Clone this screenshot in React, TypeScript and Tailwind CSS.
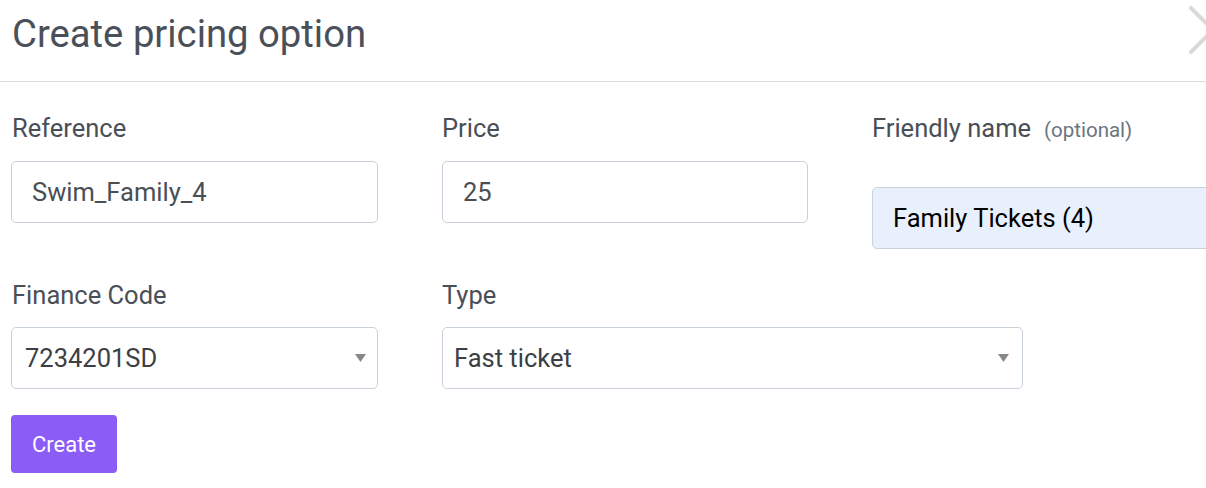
import React from "react";

const font = { fontFamily: "Roboto, 'Noto Sans', Arial, sans-serif" };

function Caret() {
  return (
    <svg width="11" height="8" viewBox="0 0 11 8">
      <path d="M0 0 L11 0 L5.5 8 Z" fill="#888888" />
    </svg>
  );
}

export default function App() {
  return (
    <div
      className="w-[1206px] h-[488px] overflow-hidden bg-white relative"
      style={font}
    >
      <div className="relative border-b border-[#d9dfe5] pt-[12px] pb-[24px] pl-[12px]">
        <h1 className="text-[38.25px] leading-[45px] text-[#4a5059] font-normal">
          Create pricing option
        </h1>
        <svg
          className="absolute left-[1189px] top-[6px]"
          width="48"
          height="48"
          viewBox="0 0 48 48"
        >
          <path
            d="M2 2 L46 46 M46 2 L2 46"
            stroke="#d9d9d9"
            strokeWidth="4"
            strokeLinecap="round"
            fill="none"
          />
        </svg>
      </div>

      <div className="pl-[11px] pt-[31px]">
        <div className="flex items-start gap-[64px] h-[110px]">
          <div className="w-[367px] shrink-0">
            <div className="text-[25.5px] leading-[30px] text-[#4a4f57] pl-[1px]">
              Reference
            </div>
            <div className="mt-[18px] h-[62px] border border-[#c9d1da] rounded-[5px] flex items-center pl-[20px] text-[25.5px] text-[#4a4f55]">
              Swim_Family_4
            </div>
          </div>
          <div className="w-[366px] shrink-0">
            <div className="text-[25.5px] leading-[30px] text-[#4a4f57]">
              Price
            </div>
            <div className="mt-[18px] h-[62px] border border-[#c9d1da] rounded-[5px] flex items-center pl-[20px] text-[25.5px] text-[#4a4f55]">
              25
            </div>
          </div>
          <div className="w-[366px] shrink-0">
            <div className="flex items-baseline leading-[30px]">
              <span className="text-[25.5px] text-[#4a4f57]">Friendly name</span>
              <span className="ml-[13px] text-[20.5px] text-[#6b7580]">
                (optional)
              </span>
            </div>
            <div className="mt-[42px] h-[62px] border border-[#c9d1da] rounded-[5px] bg-[#e8f0fe] flex items-center pl-[20px] text-[25.5px] text-black">
              Family Tickets (4)
            </div>
          </div>
        </div>

        <div className="flex gap-[64px] mt-[57px]">
          <div className="w-[367px] shrink-0">
            <div className="text-[25.5px] leading-[30px] text-[#4a4f57] pl-[1px]">
              Finance Code
            </div>
            <div className="mt-[17px] h-[62px] border border-[#c9d1da] rounded-[5px] flex items-center justify-between pl-[13px] pr-[11px] text-[25.5px] text-[#3c3f44]">
              <span>7234201SD</span>
              <Caret />
            </div>
          </div>
          <div className="w-[581px] shrink-0">
            <div className="text-[25.5px] leading-[30px] text-[#4a4f57]">
              Type
            </div>
            <div className="mt-[17px] h-[62px] border border-[#c9d1da] rounded-[5px] flex items-center justify-between pl-[11px] pr-[13px] text-[25.5px] text-[#3c3f44]">
              <span>Fast ticket</span>
              <Caret />
            </div>
          </div>
        </div>

        <button className="mt-[26px] w-[106px] h-[58px] rounded-[4px] bg-[#8b5cf6] text-white text-[22px] flex items-center justify-center">
          Create
        </button>
      </div>
    </div>
  );
}
